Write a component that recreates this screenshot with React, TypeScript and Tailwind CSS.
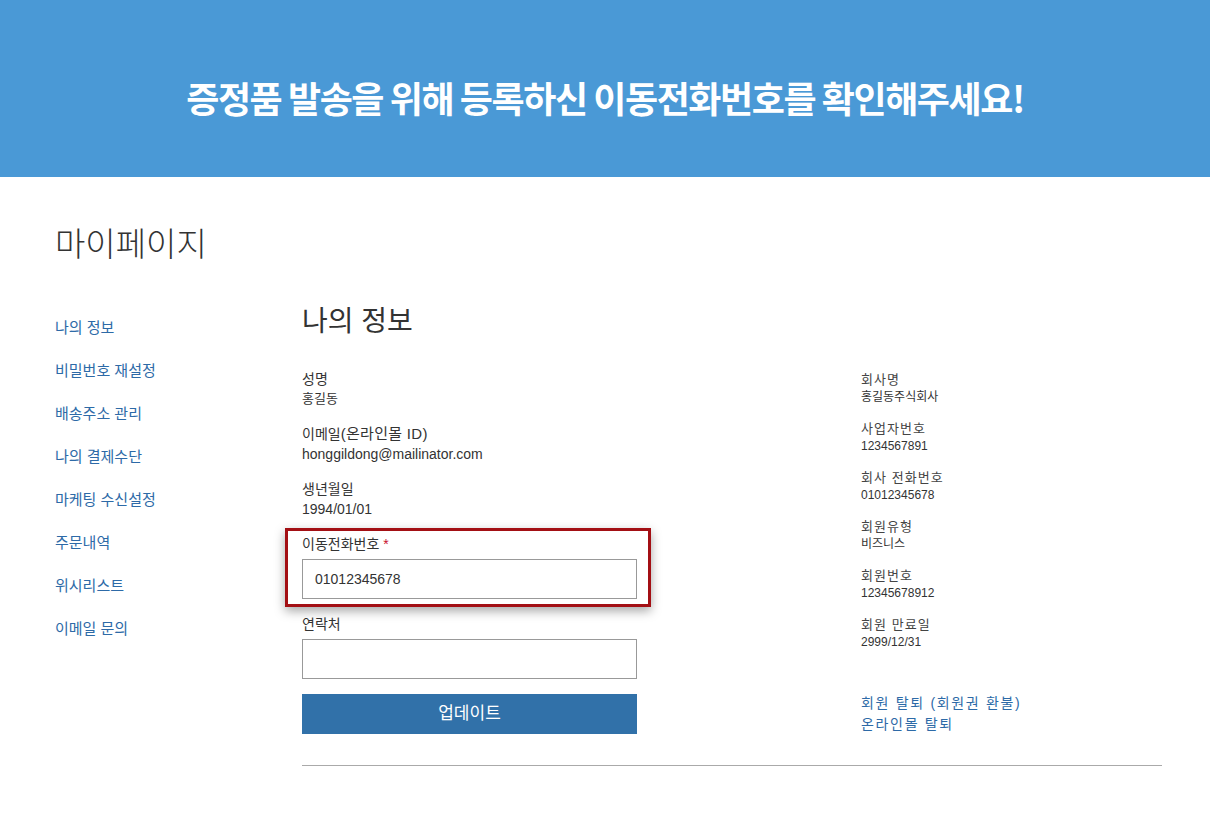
import React from "react";

const KR = { fontFamily: '"Liberation Sans", "Noto Sans CJK KR", sans-serif' };

const navItems = [
  "나의 정보",
  "비밀번호 재설정",
  "배송주소 관리",
  "나의 결제수단",
  "마케팅 수신설정",
  "주문내역",
  "위시리스트",
  "이메일 문의",
];

const rightFields = [
  ["회사명", "홍길동주식회사"],
  ["사업자번호", "1234567891"],
  ["회사 전화번호", "01012345678"],
  ["회원유형", "비즈니스"],
  ["회원번호", "12345678912"],
  ["회원 만료일", "2999/12/31"],
];

export default function App() {
  return (
    <div className="min-h-[835px] w-full bg-white text-[#333]" style={KR}>
      <div className="flex h-[177px] items-center justify-center bg-[#4a99d6] pt-[16px]">
        <h2
          className="text-[36px] font-bold tracking-[-0.04em] text-white"
          style={{ fontFamily: '"Noto Sans CJK KR", sans-serif' }}
        >
          증정품 발송을 위해 등록하신 이동전화번호를 확인해주세요!
        </h2>
      </div>

      <div className="px-[55px] pr-[48px]">
        <h1 className="mt-[48px] h-[40px] text-[33px] font-light leading-[40px] text-[#333]">
          마이페이지
        </h1>

        <div className="mt-[41px] flex">
          <nav className="flex w-[247px] shrink-0 flex-col gap-[23px] pt-[12px]">
            {navItems.map((n) => (
              <a key={n} className="h-[20px] text-[15px] leading-[20px] text-[#2d6aa7]">
                {n}
              </a>
            ))}
          </nav>

          <div className="flex-1">
            <h3 className="h-[32px] text-[28px] leading-[32px] text-[#333]">나의 정보</h3>

            <div className="flex">
              <div className="w-[559px] shrink-0 pt-[31px]">
                <div className="flex flex-col gap-[15px]">
                  <div>
                    <div className="h-[20px] text-[14px] leading-[20px]">성명</div>
                    <div className="h-[20px] text-[13px] leading-[20px]">홍길동</div>
                  </div>
                  <div>
                    <div className="h-[20px] text-[14px] leading-[20px]">
                      이메일<span className="text-[15px] tracking-[0.02em]">(온라인몰 ID)</span>
                    </div>
                    <div className="h-[20px] text-[14px] leading-[20px]">honggildong@mailinator.com</div>
                  </div>
                  <div>
                    <div className="h-[20px] text-[14px] leading-[20px]">생년월일</div>
                    <div className="h-[20px] text-[14px] leading-[20px]">1994/01/01</div>
                  </div>
                  <div className="relative w-[335px]">
                    <div className="pointer-events-none absolute -bottom-[8px] -left-[17px] -right-[14px] -top-[6px] border-[3px] border-[#a30f14] shadow-[0_4px_10px_rgba(0,0,0,0.35)]" />
                    <div className="h-[20px] text-[14px] leading-[20px]">
                      이동전화번호 <span className="text-[#c8102e]">*</span>
                    </div>
                    <div className="mt-[5px] flex h-[40px] items-center border border-[#999] px-[12px] text-[14px]">
                      01012345678
                    </div>
                  </div>
                  <div className="w-[335px]">
                    <div className="h-[20px] text-[14px] leading-[20px]">연락처</div>
                    <div className="mt-[5px] h-[40px] border border-[#999]" />
                  </div>
                </div>
                <button className="mt-[15px] flex h-[40px] w-[335px] items-center justify-center bg-[#3171a9] text-[17px] text-white">
                  업데이트
                </button>
              </div>

              <div className="flex-1 pt-[33px]">
                <div className="flex flex-col gap-[15px]">
                  {rightFields.map(([l, v]) => (
                    <div key={l}>
                      <div className="h-[18px] text-[13px] leading-[18px] tracking-[0.08em] text-[#444]">{l}</div>
                      <div className="h-[16px] text-[12px] leading-[16px] text-[#333]">{v}</div>
                    </div>
                  ))}
                </div>
                <div className="mt-[43px] flex flex-col">
                  <a className="h-[21px] text-[14px] leading-[21px] tracking-[0.12em] text-[#2d6aa7]">
                    회원 탈퇴 (회원권 환불)
                  </a>
                  <a className="h-[21px] text-[14px] leading-[21px] tracking-[0.12em] text-[#2d6aa7]">
                    온라인몰 탈퇴
                  </a>
                </div>
              </div>
            </div>

            <div className="mt-[30px] h-px w-full bg-[#aaa]" />
          </div>
        </div>
      </div>
    </div>
  );
}
